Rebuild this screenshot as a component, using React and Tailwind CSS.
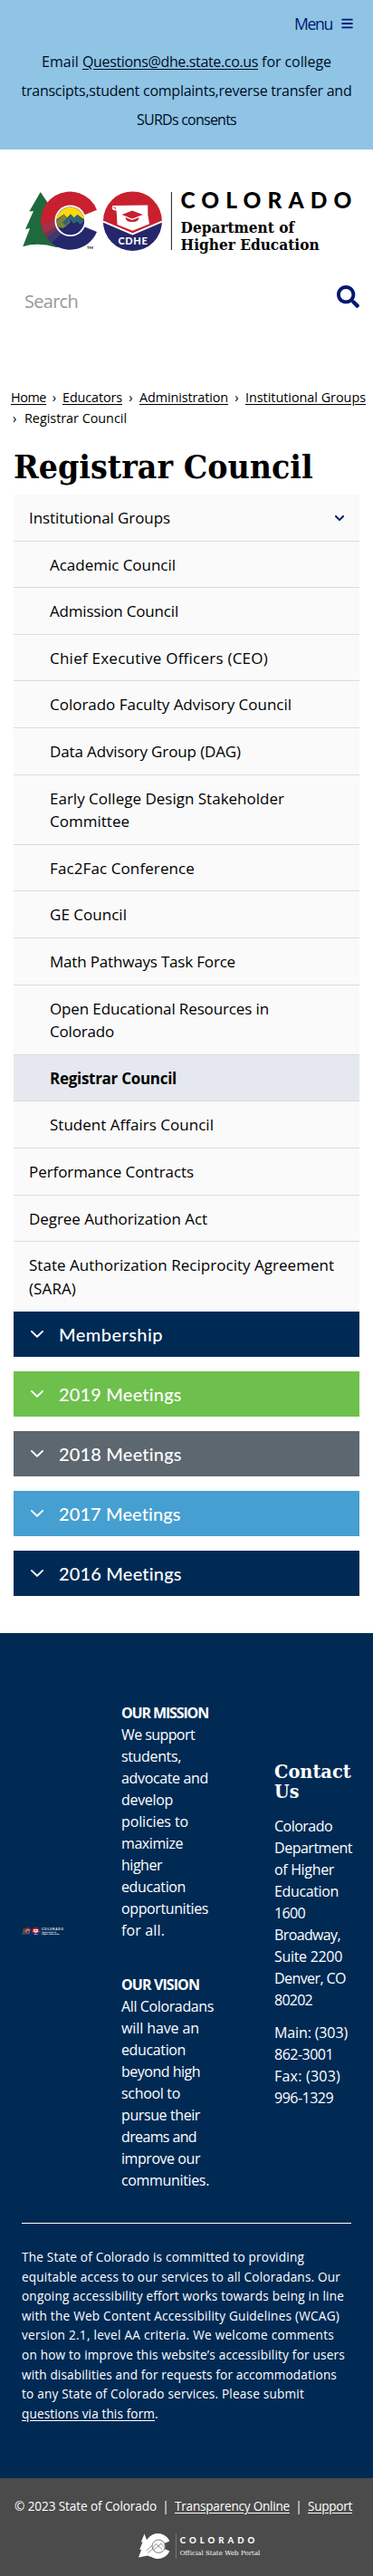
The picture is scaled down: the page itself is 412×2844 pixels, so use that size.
import React, { useLayoutEffect, useRef, useState } from "react";
import { FaBars, FaSearch, FaChevronDown } from "react-icons/fa";

/* One line of text whose tracking is adjusted so that it spans `w` pixels. */
function Line({ w, children, className = "" }) {
  const ref = useRef(null);
  const [spacing, setSpacing] = useState(0);
  useLayoutEffect(() => {
    const natural = ref.current.getBoundingClientRect().width;
    setSpacing((w - natural) / children.length);
  }, [w, children]);
  return (
    <span ref={ref} className={"whitespace-nowrap " + className} style={{ letterSpacing: spacing }}>
      {children}
    </span>
  );
}

/* Slab heading line, condensed horizontally to span `w` pixels. */
function Slab({ w, children }) {
  const ref = useRef(null);
  const [scale, setScale] = useState(1);
  useLayoutEffect(() => {
    setScale(w / ref.current.offsetWidth);
  }, [w]);
  return (
    <span className="block">
      <span ref={ref} className="inline-block origin-left whitespace-nowrap" style={{ transform: `scaleX(${scale})` }}>
        {children}
      </span>
    </span>
  );
}

function Logo({ className, light }) {
  const ink = light ? "#ffffff" : "#000000";
  return (
    <svg viewBox="0 0 364 67" className={className} role="img" aria-label="Colorado Department of Higher Education">
      <path d="M20.7 0 L8.3 21.6 L13 21 L4 41 L9 40 L1.2 60.3 Q18 55 38 61 L48 60 L48 40 Z" fill="#1f6a3c" />
      <path d="M53.5 31.8 L83 19.7 A32 32 0 1 0 28.7 52 Z" fill="#c8202f" />
      <path d="M53.5 31.8 L83 43.9 A32 32 0 0 1 28.7 52 Z" fill="#24276b" />
      <path d="M21.8 36 A32 32 0 0 0 25 46 L39 39 L36.8 31 Z" fill="#a4304a" />
      <path d="M25 46 A32 32 0 0 0 31 54.5 L42 44 L38 38 Z" fill="#6f3658" />
      <path d="M28 50 A32 32 0 0 0 33 56 L44 46 L40 41 Z" fill="#3d3a70" />
      <circle cx="53.7" cy="31.8" r="17.3" fill="#ffffff" />
      <circle cx="53.7" cy="31.8" r="15.4" fill="#24276b" />
      <path d="M38.4 30.5 A15.4 15.4 0 0 1 69 30.5 L61.5 25 L57.8 28.4 L54 24.4 L50 28.5 L46.5 24.6 Z" fill="#fbd90b" />
      <path d="M38.3 31.8 L46.5 24.6 L54 33 L46 40 L40 38.5 Z" fill="#7d8435" />
      <path d="M45 33.5 L54 24.4 L57.8 28.6 L61.5 25 L69 31.8 L64.5 36 L61 32.4 L57.6 35 L54 31 L48 37 Z" fill="#2f6577" />
      <text x="72" y="63" fontSize="4.4" fontFamily="Lato, sans-serif" fontWeight="700" fill={ink}>TM</text>

      <circle cx="122.4" cy="31.8" r="32.4" fill="#c8202f" />
      <path d="M90 32.6 L122.4 46.4 L154.8 32.6 A32.4 32.4 0 0 1 90 32.6 Z" fill="#24276b" />
      <path d="M90 32.6 L122.4 46.4 L154.8 32.6" fill="none" stroke="#ffffff" strokeWidth="2" />
      <path d="M100.5 15 L139.3 14.6 Q138.5 25 141 35.2 L122.4 42.8 L105.6 36 L104.6 20.5 Q100 20.5 99.6 17.5 Z" fill="#ffffff" />
      <path d="M100.6 17 L103.4 17 L103.4 19" fill="none" stroke="#c8202f" strokeWidth="0.8" />
      <path d="M110.6 25 L122 20.6 L133.8 25 L122 29.4 Z" fill="#c8202f" />
      <path d="M114.6 28 L122 31 L129.6 28 Q129.6 33 122 33 Q114.6 33 114.6 28 Z" fill="#c8202f" />
      <text x="106.4" y="58" fontSize="11" fontFamily="Lato, sans-serif" fontWeight="900" fill="#ffffff" textLength="32.4">CDHE</text>

      <path d="M165.4 0 V64" stroke={ink} strokeWidth="0.9" />
      <text x="175.4" y="18" fontSize="24.5" fontFamily="Lato, sans-serif" fontWeight="900" fill={ink} textLength="189">COLORADO</text>
      <text x="175.6" y="45.4" fontSize="17" fontFamily="DejaVu Serif, serif" fontWeight="700" fill={ink} textLength="125.5" lengthAdjust="spacingAndGlyphs">Department of</text>
      <text x="175.6" y="64" fontSize="17" fontFamily="DejaVu Serif, serif" fontWeight="700" fill={ink} textLength="153" lengthAdjust="spacingAndGlyphs">Higher Education</text>
    </svg>
  );
}

function PortalLogo() {
  return (
    <svg viewBox="0 0 136 31" className="h-[31px] w-[136px] overflow-visible" role="img" aria-label="Colorado Official State Web Portal">
      <path d="M6.5 1.6 L2.8 10.5 L4.6 10.3 L1.2 19 L3.2 18.8 L0 27.5 L10 25.5 L14 27 L14 5 L9 8 Z" fill="#fff" />
      <path d="M21.7 15 L34.4 9.6 A14 14 0 1 0 34.4 20.4 Z" fill="#fff" />
      <circle cx="22.2" cy="15.2" r="7.2" fill="#fff" stroke="#6a6a6a" strokeWidth="0.9" />
      <path d="M15.5 17 L19.3 12.6 L22 15 L24.6 12 L29 16.5 M17 19 L22 15 L26 18.5 M10.5 22.5 L16.5 17.5 M8.5 20 L15 14.5" fill="none" stroke="#777" strokeWidth="0.8" />
      <path d="M41.4 1 V29" stroke="#858585" strokeWidth="0.8" />
      <text x="45.8" y="12.2" fontSize="9.6" fontFamily="Lato, sans-serif" fontWeight="900" fill="#fff" textLength="82.6">COLORADO</text>
      <text x="45.8" y="24.6" fontSize="6.9" fontFamily="DejaVu Serif, serif" fill="#fff" textLength="88.6" lengthAdjust="spacingAndGlyphs">Official State Web Portal</text>
    </svg>
  );
}

const NAV = [
  { lines: [["Institutional Groups", 156]], open: true },
  { lines: [["Academic Council", 139]], sub: true },
  { lines: [["Admission Council", 142]], sub: true },
  { lines: [["Chief Executive Officers (CEO)", 241]], sub: true },
  { lines: [["Colorado Faculty Advisory Council", 267]], sub: true },
  { lines: [["Data Advisory Group (DAG)", 211]], sub: true },
  { lines: [["Early College Design Stakeholder", 259], ["Committee", 88]], sub: true },
  { lines: [["Fac2Fac Conference", 160]], sub: true },
  { lines: [["GE Council", 85]], sub: true },
  { lines: [["Math Pathways Task Force", 205]], sub: true },
  { lines: [["Open Educational Resources in", 242], ["Colorado", 71]], sub: true },
  { lines: [["Registrar Council", 140]], sub: true, active: true },
  { lines: [["Student Affairs Council", 181]], sub: true },
  { lines: [["Performance Contracts", 182]] },
  { lines: [["Degree Authorization Act", 197]] },
  { lines: [["State Authorization Reciprocity Agreement", 337], ["(SARA)", 52]] },
];

const PANELS = [
  ["Membership", 115, "bg-[#002a54]"],
  ["2019 Meetings", 136, "bg-[#6dc04b]"],
  ["2018 Meetings", 136, "bg-[#5d6770]"],
  ["2017 Meetings", 135, "bg-[#459fd0]"],
  ["2016 Meetings", 136, "bg-[#002a54]"],
];

const MISSION = [["We support", 81], ["students,", 66], ["advocate and", 96], ["develop", 57], ["policies to", 74], ["maximize", 68], ["higher", 45], ["education", 71], ["opportunities", 96], ["for all.", 48]];
const VISION = [["All Coloradans", 102], ["will have an", 86], ["education", 71], ["beyond high", 87], ["school to", 65], ["pursue their", 87], ["dreams and", 83], ["improve our", 87], ["communities.", 97]];
const ADDRESS = [["Colorado", 64], ["Department", 86], ["of Higher", 66], ["Education", 71], ["1600", 34], ["Broadway,", 73], ["Suite 2200", 75], ["Denver, CO", 79], ["80202", 42]];
const PHONES = [["Main: (303)", 81], ["862-3001", 65], ["Fax: (303)", 73], ["996-1329", 65]];
const STATEMENT = [
  ["The State of Colorado is committed to providing", 312],
  ["equitable access to our services to all Coloradans. Our", 352],
  ["ongoing accessibility effort works towards being in line", 356],
  ["with the Web Content Accessibility Guidelines (WCAG)", 351],
  ["version 2.1, level AA criteria. We welcome comments", 345],
  ["on how to improve this website’s accessibility for users", 357],
  ["with disabilities and for requests for accommodations", 348],
  ["to any State of Colorado services. Please submit", 312],
];

function Lines({ items }) {
  return items.map(([text, w]) => (
    <span key={text} className="block">
      <Line w={w}>{text}</Line>
    </span>
  ));
}

export default function App() {
  return (
    <div className="h-[2844px] w-[412px] overflow-hidden bg-white font-['Open_Sans',sans-serif] text-base text-black">
      <header>
        <div className="h-[165px] bg-[#8fc4e5] pt-[13px]">
          <div className="flex h-[26px] items-center justify-end gap-[10px] pr-[22px] text-[17.6px] text-[#001970]">
            <Line w={42}>Menu</Line>
            <FaBars className="h-[14px] w-[13px]" />
          </div>
          <div className="mt-[13px] text-center leading-[32px] text-[#000d1e]">
            <p>
              <Line w={45}>{"Email "}</Line>
              <Line w={194} className="underline underline-offset-2">Questions@dhe.state.co.us</Line>
              <Line w={81}>{" for college"}</Line>
            </p>
            <p><Line w={365}>transcipts,student complaints,reverse transfer and</Line></p>
            <p><Line w={110}>SURDs consents</Line></p>
          </div>
        </div>
        <div className="pl-6 pt-[47px]">
          <Logo className="block h-[67px] w-[364px] overflow-visible" />
        </div>
        <div className="flex h-[70px] items-center justify-between pl-[27px] pr-[15px] pt-[36px]">
          <span className="pt-[2px] text-[20px] leading-[28px] text-[#999]"><Line w={59}>Search</Line></span>
          <FaSearch className="-mt-[9px] size-[25px] text-[#001970]" />
        </div>
      </header>

      <nav className="pl-3 pt-[78px] text-[14.4px] leading-[23px]">
        <div className="flex">
          <Line w={39} className="underline underline-offset-2">Home</Line>
          <span className="w-[18px] text-center">›</span>
          <Line w={66} className="underline underline-offset-2">Educators</Line>
          <span className="w-[19px] text-center">›</span>
          <Line w={98} className="underline underline-offset-2">Administration</Line>
          <span className="w-[19px] text-center">›</span>
          <Line w={133} className="underline underline-offset-2">Institutional Groups</Line>
        </div>
        <div className="flex">
          <span className="w-[15px] pl-[2px]">›</span>
          <Line w={113}>Registrar Council</Line>
        </div>
      </nav>

      <main className="px-[15px]">
        <h1 className="mt-[21px] h-[52px] font-['DejaVu_Serif',serif] text-[35.5px] font-bold leading-[44px]">
          <Slab w={331}>Registrar Council</Slab>
        </h1>

        <ul className="h-[902px] text-[17px]">
          {NAV.map(({ lines, sub, open, active }, i) => (
            <li
              key={i}
              className={
                "flex items-start justify-between border-b pb-[12px] pt-[13px] pr-[16px] leading-[25.6px] " +
                (sub ? "pl-10 " : "pl-[17px] ") +
                (active ? "bg-[#e5e8ef] font-bold " : "bg-[#fafafa] ") +
                (i === NAV.length - 1 ? "border-[#fafafa]" : "border-[#dcdcdc]")
              }
            >
              <span><Lines items={lines} /></span>
              {open && <FaChevronDown className="mt-[7px] size-[12px] text-[#001970]" />}
            </li>
          ))}
        </ul>

        <div className="flex flex-col gap-4">
          {PANELS.map(([title, w, bg]) => (
            <div key={title} className={"flex h-[50px] items-center pl-[19px] font-['Lato',sans-serif] text-[20px] text-white " + bg}>
              <svg viewBox="0 0 14 8" className="mr-[17px] h-[8px] w-[14px] overflow-visible" fill="none" stroke="currentColor" strokeWidth="1.9" strokeLinecap="round" strokeLinejoin="round">
                <path d="M0.9 0.9 L7 6.8 L13.1 0.9" />
              </svg>
              <Line w={w} className="font-medium">{title}</Line>
            </div>
          ))}
        </div>
      </main>

      <footer className="mt-[41px]">
        <div className="h-[933px] bg-[#002a54] px-6 text-white">
          <div className="flex h-[651px] items-center">
            <div className="w-[110px] shrink-0 pt-[7px]">
              <Logo light className="block h-[9px] w-[46px]" />
            </div>
            <div className="w-[169px] shrink-0 pt-[41px] leading-6">
              <p><Line w={96} className="font-bold">OUR MISSION</Line></p>
              <p><Lines items={MISSION} /></p>
              <p className="mt-9"><Line w={86} className="font-bold">OUR VISION</Line></p>
              <p><Lines items={VISION} /></p>
            </div>
            <div className="shrink-0 pt-[15px] leading-6">
              <h2 className="mb-[15px] font-['DejaVu_Serif',serif] text-[20.5px] font-bold leading-[22px]">
                <Slab w={85}>Contact</Slab>
                <Slab w={27}>Us</Slab>
              </h2>
              <p><Lines items={ADDRESS} /></p>
              <p className="mt-3"><Lines items={PHONES} /></p>
            </div>
          </div>
          <hr className="border-t border-white" />
          <p className="pt-[26px] text-[13.6px] leading-[21.6px]">
            <Lines items={STATEMENT} />
            <span className="block">
              <Line w={147} className="underline underline-offset-2">questions via this form</Line>.
            </span>
          </p>
        </div>
        <div className="h-[108px] bg-[#4b4b4b] pl-4 pt-[20px] text-[13.6px] text-white">
          <div className="flex h-[22px] items-center">
            <Line w={157}>© 2023 State of Colorado</Line>
            <span className="w-[20px] text-center">|</span>
            <Line w={127} className="underline underline-offset-2">Transparency Online</Line>
            <span className="w-[20px] text-center">|</span>
            <Line w={49} className="underline underline-offset-2">Support</Line>
          </div>
          <div className="pl-[137px] pt-[18px]">
            <PortalLogo />
          </div>
        </div>
      </footer>
    </div>
  );
}
